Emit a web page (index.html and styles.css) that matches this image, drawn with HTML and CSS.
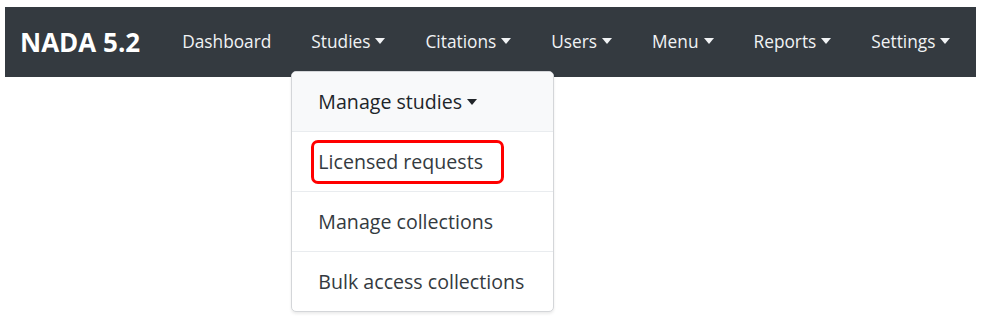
FILE: index.html
```html
<!DOCTYPE html>
<html lang="en">
<head>
  <meta charset="UTF-8">
  <title>NADA 5.2</title>
  <link rel="stylesheet" href="styles.css">
</head>
<body>

  <nav class="navbar">
    <a class="brand" href="#">NADA 5.2</a>
    <ul class="nav">
      <li><a href="#">Dashboard</a></li>
      <li class="dropdown">
        <a href="#" class="toggle">Studies</a>
        <div class="dropdown-menu">
          <a href="#" class="item active toggle-dark">Manage studies</a>
          <a href="#" class="item"><span class="marked">Licensed requests</span></a>
          <a href="#" class="item">Manage collections</a>
          <a href="#" class="item">Bulk access collections</a>
        </div>
      </li>
      <li><a href="#" class="toggle">Citations</a></li>
      <li><a href="#" class="toggle">Users</a></li>
      <li><a href="#" class="toggle">Menu</a></li>
      <li><a href="#" class="toggle">Reports</a></li>
      <li><a href="#" class="toggle">Settings</a></li>
    </ul>
  </nav>

</body>
</html>
```

FILE: styles.css
```css
* {
  box-sizing: border-box;
  margin: 0;
  padding: 0;
}

html,
body {
  min-height: 100%;
}

body {
  font-family: "Open Sans", "Noto Sans", sans-serif;
  background-color: #ffffff;
  padding: 7px 5px 0;
  min-height: 321px;
}

a {
  text-decoration: none;
  white-space: nowrap;
}

.navbar {
  display: flex;
  align-items: center;
  height: 70px;
  background-color: #343a40;
  padding-left: 15px;
}

.brand {
  flex-shrink: 0;
  color: #ffffff;
  font-size: 26px;
  font-weight: bold;
  margin-right: 22px;
}

.nav {
  display: flex;
  list-style: none;
}

.nav > li {
  position: relative;
  flex-shrink: 0;
}

.nav > li > a {
  display: block;
  padding: 0 20px;
  color: #f1f3f5;
  font-size: 17.3px;
  line-height: 70px;
}

.toggle::after,
.toggle-dark::after {
  content: "";
  display: inline-block;
  margin-left: 5px;
  vertical-align: 4px;
  border-top: 6px solid #f1f3f5;
  border-left: 5px solid transparent;
  border-right: 5px solid transparent;
}

.toggle-dark::after {
  border-top-color: #212529;
}

.dropdown-menu {
  position: absolute;
  top: 64px;
  left: 0;
  width: 263px;
  background-color: #ffffff;
  border: 1px solid #d4d6d9;
  border-radius: 5px;
  box-shadow: 0 2px 3px rgba(0, 0, 0, 0.08);
  overflow: hidden;
  z-index: 10;
}

.item {
  display: flex;
  align-items: center;
  height: 60px;
  padding-left: 26px;
  color: #343a40;
  font-size: 19.6px;
  border-top: 1px solid #e9ecef;
}

.item:first-child {
  border-top: none;
  height: 59px;
}

.item.active {
  background-color: #f8f9fa;
  color: #212529;
}

.marked {
  margin-left: -7px;
  padding: 5px 18px 6px 4px;
  border: 3px solid #ff0000;
  border-radius: 7px;
}
```
